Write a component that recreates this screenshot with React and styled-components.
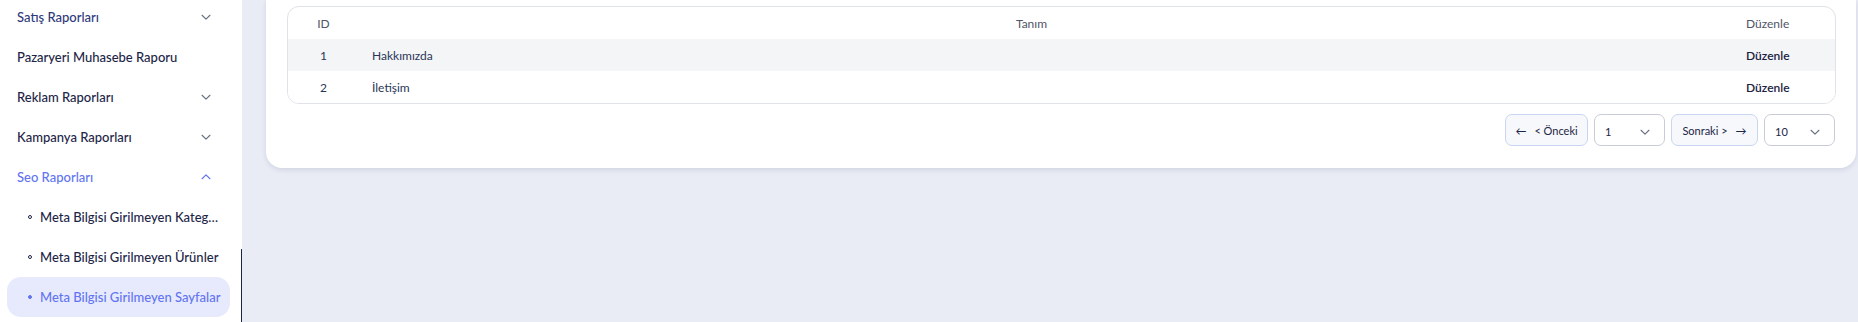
import React from 'react';
import styled, { createGlobalStyle } from 'styled-components';

const GlobalStyle = createGlobalStyle`
  html, body {
    margin: 0;
    padding: 0;
    height: 322px;
    overflow: hidden;
    background: #e9ecf5;
    font-family: 'Lato', 'Liberation Sans', sans-serif;
    color: #1d2547;
  }
  * { box-sizing: border-box; }
`;

const Layout = styled.div`
  display: flex;
  width: 1858px;
  height: 322px;
`;

const Sidebar = styled.aside`
  position: relative;
  width: 242px;
  flex-shrink: 0;
  background: #ffffff;
  padding: 0 12px 0 7px;
  overflow: hidden;
`;

const ScrollThumb = styled.div`
  position: absolute;
  right: 0;
  top: 249px;
  width: 1.5px;
  height: 80px;
  background: #1d2547;
`;

const MenuList = styled.ul`
  list-style: none;
  margin: -3px 0 0;
  padding: 0;
  display: flex;
  flex-direction: column;
`;

const MenuItem = styled.li`
  display: flex;
  align-items: center;
  justify-content: space-between;
  height: 40px;
  padding: ${({ $sub }) => ($sub ? '0 8px 0 21px' : '0 17px 0 10px')};
  border-radius: 14px;
  font-size: 13px;
  font-weight: 500;
  color: ${({ $active }) => ($active ? '#6274f2' : '#1d2547')};
  background: ${({ $selected }) => ($selected ? '#e7eafc' : 'transparent')};
  white-space: nowrap;
`;

const Label = styled.span`
  display: flex;
  align-items: center;
  gap: 8px;
  min-width: 0;
  flex: 1;
  overflow: hidden;
`;

const Bullet = styled.span`
  width: 4px;
  height: 4px;
  flex-shrink: 0;
  border-radius: 50%;
  border: 1px solid currentColor;
  background: ${({ $filled }) => ($filled ? 'currentColor' : 'transparent')};
`;

const Ellipsis = styled.span`
  flex: 1;
  min-width: 0;
  overflow: hidden;
  text-overflow: ellipsis;
`;

const Main = styled.main`
  flex: 1;
  padding: 0 2px 0 24px;
  min-width: 0;
`;

const Card = styled.section`
  background: #ffffff;
  border-radius: 0 0 16px 16px;
  box-shadow: 0 2px 5px rgba(40, 50, 90, 0.12);
  padding: 6px 20px 22px 21px;
  display: flex;
  flex-direction: column;
  gap: 10px;
`;

const TableBox = styled.div`
  border: 1px solid #dfe2e8;
  border-radius: 12px;
  overflow: hidden;
`;

const Table = styled.table`
  width: 100%;
  border-collapse: collapse;
  table-layout: fixed;
  font-size: 12px;
`;

const Th = styled.th`
  height: 32px;
  font-weight: 400;
  color: #4f5568;
  text-align: ${({ $align }) => $align || 'left'};
  padding: ${({ $pad }) => $pad || '0'};
`;

const Row = styled.tr`
  background: ${({ $striped }) => ($striped ? '#f4f5f7' : '#ffffff')};
`;

const Td = styled.td`
  height: 32px;
  padding: ${({ $pad }) => $pad || '0'};
  color: ${({ $strong }) => ($strong ? '#1a2240' : '#2a3657')};
  font-weight: ${({ $strong }) => ($strong ? 600 : 400)};
  text-align: ${({ $align }) => $align || 'left'};
`;

const Pager = styled.div`
  display: flex;
  justify-content: flex-end;
  gap: 6px;
  padding-right: 1px;
`;

const PageButton = styled.button`
  height: 32px;
  width: ${({ $w }) => $w}px;
  display: flex;
  align-items: center;
  justify-content: center;
  gap: 8px;
  border: 1px solid #c9d5f3;
  border-radius: 7px;
  background: #f6f8fb;
  font-family: inherit;
  font-size: 11px;
  color: #1d2547;
  padding: 0;
`;

const Select = styled.div`
  height: 32px;
  width: 71px;
  display: flex;
  align-items: center;
  justify-content: space-between;
  padding: 3px 12px 0 10px;
  border: 1px solid #c8ccd6;
  border-radius: 7px;
  background: #ffffff;
  font-size: 11px;
  color: #1d2547;
`;

const Chevron = ({ up, color = '#6b7184', size = 14 }) => (
  <svg width={size} height={size} viewBox="0 0 16 16" fill="none" stroke={color} strokeWidth="1.3" strokeLinecap="round" strokeLinejoin="round">
    {up ? <path d="M3.5 10l4.5-4.5 4.5 4.5" /> : <path d="M3.5 6l4.5 4.5 4.5-4.5" />}
  </svg>
);

const menu = [
  { label: 'Satış Raporları', chevron: true, color: '#2e3a7a' },
  { label: 'Pazaryeri Muhasebe Raporu' },
  { label: 'Reklam Raporları', chevron: true },
  { label: 'Kampanya Raporları', chevron: true },
  { label: 'Seo Raporları', chevron: 'up', active: true },
];

const subMenu = [
  { label: 'Meta Bilgisi Girilmeyen Kategori Sayfaları' },
  { label: 'Meta Bilgisi Girilmeyen Ürünler' },
  { label: 'Meta Bilgisi Girilmeyen Sayfalar', selected: true },
];

const rows = [
  { id: 1, name: 'Hakkımızda' },
  { id: 2, name: 'İletişim' },
];

export default function App() {
  return (
    <>
      <GlobalStyle />
      <Layout>
        <Sidebar>
          <MenuList>
            {menu.map((m) => (
              <MenuItem key={m.label} $active={m.active}>
                <Label style={m.color ? { color: m.color } : undefined}>{m.label}</Label>
                {m.chevron && <Chevron up={m.chevron === 'up'} color={m.active ? '#6274f2' : '#6b7184'} />}
              </MenuItem>
            ))}
            {subMenu.map((s) => (
              <MenuItem key={s.label} $sub $active={s.selected} $selected={s.selected}>
                <Label>
                  <Bullet $filled={s.selected} />
                  <Ellipsis>{s.label}</Ellipsis>
                </Label>
              </MenuItem>
            ))}
          </MenuList>
          <ScrollThumb />
        </Sidebar>
        <Main>
          <Card>
            <TableBox>
              <Table>
                <colgroup>
                  <col style={{ width: '71px' }} />
                  <col />
                  <col style={{ width: '131px' }} />
                </colgroup>
                <thead>
                  <tr>
                    <Th $align="center">ID</Th>
                    <Th $align="center">Tanım</Th>
                    <Th $pad="0 0 0 42px">Düzenle</Th>
                  </tr>
                </thead>
                <tbody>
                  {rows.map((r, i) => (
                    <Row key={r.id} $striped={i === 0}>
                      <Td $align="center">{r.id}</Td>
                      <Td $pad="0 0 0 13px">{r.name}</Td>
                      <Td $strong $pad="0 0 0 42px">Düzenle</Td>
                    </Row>
                  ))}
                </tbody>
              </Table>
            </TableBox>
            <Pager>
              <PageButton $w={83}>
                <span>←</span>
                <span>&lt; Önceki</span>
              </PageButton>
              <Select>
                <span>1</span>
                <Chevron />
              </Select>
              <PageButton $w={87}>
                <span>Sonraki &gt;</span>
                <span>→</span>
              </PageButton>
              <Select>
                <span>10</span>
                <Chevron />
              </Select>
            </Pager>
          </Card>
        </Main>
      </Layout>
    </>
  );
}
